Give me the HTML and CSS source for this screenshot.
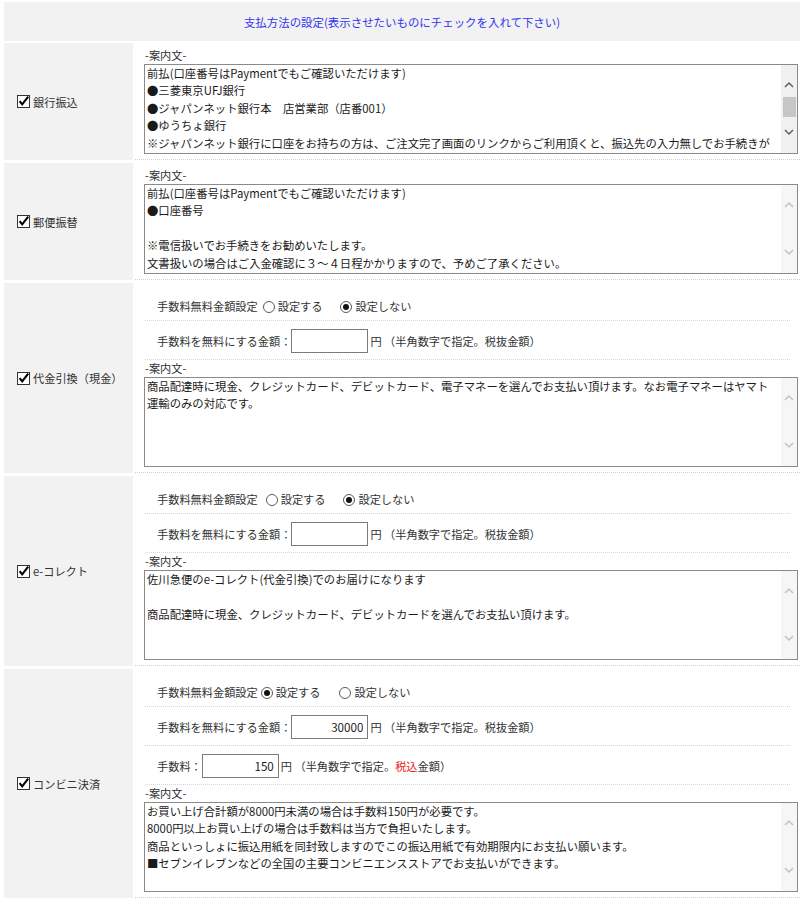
FILE: index.html
```html
<!DOCTYPE html>
<html lang="ja">
<head>
<meta charset="utf-8">
<title>支払方法の設定</title>
<link rel="stylesheet" href="styles.css">
</head>
<body>
<div class="page">
  <div class="head">支払方法の設定(表示させたいものにチェックを入れて下さい)</div>

  <div class="row">
    <div class="name">
      <svg class="cb" width="14" height="14" viewBox="0 0 14 14"><rect x="0.5" y="1.5" width="12" height="12" fill="#fff" stroke="#333"/><path d="M2.6 7.2 L5.2 10.4 L11.2 2.6" fill="none" stroke="#000" stroke-width="2.1"/></svg>
      <span>銀行振込</span>
    </div>
    <div class="body">
      <div class="cap">-案内文-</div>
      <div class="ta">
        <div class="ta-text">前払(口座番号はPaymentでもご確認いただけます)
●三菱東京UFJ銀行
●ジャパンネット銀行本　店営業部（店番001）
●ゆうちょ銀行
※ジャパンネット銀行に口座をお持ちの方は、ご注文完了画面のリンクからご利用頂くと、振込先の入力無しでお手続きが</div>
        <div class="sb sb-on">
          <svg class="arr" width="10" height="8" viewBox="0 0 10 8"><polyline points="1,6 5,2 9,6" fill="none" stroke="#606060" stroke-width="1.5"/></svg>
          <div class="thumb"></div>
          <div class="sp"></div>
          <svg class="arr" width="10" height="8" viewBox="0 0 10 8"><polyline points="1,2 5,6 9,2" fill="none" stroke="#606060" stroke-width="1.5"/></svg>
        </div>
      </div>
    </div>
  </div>

  <div class="row">
    <div class="name">
      <svg class="cb" width="14" height="14" viewBox="0 0 14 14"><rect x="0.5" y="1.5" width="12" height="12" fill="#fff" stroke="#333"/><path d="M2.6 7.2 L5.2 10.4 L11.2 2.6" fill="none" stroke="#000" stroke-width="2.1"/></svg>
      <span>郵便振替</span>
    </div>
    <div class="body">
      <div class="cap">-案内文-</div>
      <div class="ta">
        <div class="ta-text">前払(口座番号はPaymentでもご確認いただけます)
●口座番号

※電信扱いでお手続きをお勧めいたします。
文書扱いの場合はご入金確認に３～４日程かかりますので、予めご了承ください。</div>
        <div class="sb">
          <svg class="arr" width="10" height="8" viewBox="0 0 10 8"><polyline points="1,6 5,2 9,6" fill="none" stroke="#c2c2c2" stroke-width="1.5"/></svg>
          <div class="sp"></div>
          <svg class="arr" width="10" height="8" viewBox="0 0 10 8"><polyline points="1,2 5,6 9,2" fill="none" stroke="#c2c2c2" stroke-width="1.5"/></svg>
        </div>
      </div>
    </div>
  </div>

  <div class="row">
    <div class="name">
      <svg class="cb" width="14" height="14" viewBox="0 0 14 14"><rect x="0.5" y="1.5" width="12" height="12" fill="#fff" stroke="#333"/><path d="M2.6 7.2 L5.2 10.4 L11.2 2.6" fill="none" stroke="#000" stroke-width="2.1"/></svg>
      <span>代金引換（現金）</span>
    </div>
    <div class="body">
      <div class="opts">
        <div class="opt opt-a">
          <span>手数料無料金額設定</span>
          <span class="radio gap-m"></span><span class="rlabel">設定する</span>
          <span class="radio on gap-r"></span><span class="rlabel">設定しない</span>
        </div>
        <div class="opt opt-b">
          <span>手数料を無料にする金額：</span>
          <input class="num" type="text" value="">
          <span class="yen">円 （半角数字で指定。税抜金額）</span>
        </div>
      </div>
      <div class="cap">-案内文-</div>
      <div class="ta">
        <div class="ta-text">商品配達時に現金、クレジットカード、デビットカード、電子マネーを選んでお支払い頂けます。なお電子マネーはヤマト
運輸のみの対応です。</div>
        <div class="sb">
          <svg class="arr" width="10" height="8" viewBox="0 0 10 8"><polyline points="1,6 5,2 9,6" fill="none" stroke="#c2c2c2" stroke-width="1.5"/></svg>
          <div class="sp"></div>
          <svg class="arr" width="10" height="8" viewBox="0 0 10 8"><polyline points="1,2 5,6 9,2" fill="none" stroke="#c2c2c2" stroke-width="1.5"/></svg>
        </div>
      </div>
    </div>
  </div>

  <div class="row">
    <div class="name">
      <svg class="cb" width="14" height="14" viewBox="0 0 14 14"><rect x="0.5" y="1.5" width="12" height="12" fill="#fff" stroke="#333"/><path d="M2.6 7.2 L5.2 10.4 L11.2 2.6" fill="none" stroke="#000" stroke-width="2.1"/></svg>
      <span>e-コレクト</span>
    </div>
    <div class="body">
      <div class="opts">
        <div class="opt opt-a">
          <span>手数料無料金額設定</span>
          <span class="radio gap-l"></span><span class="rlabel">設定する</span>
          <span class="radio on gap-r"></span><span class="rlabel">設定しない</span>
        </div>
        <div class="opt opt-b">
          <span>手数料を無料にする金額：</span>
          <input class="num" type="text" value="">
          <span class="yen">円 （半角数字で指定。税抜金額）</span>
        </div>
      </div>
      <div class="cap">-案内文-</div>
      <div class="ta">
        <div class="ta-text">佐川急便のe-コレクト(代金引換)でのお届けになります

商品配達時に現金、クレジットカード、デビットカードを選んでお支払い頂けます。</div>
        <div class="sb">
          <svg class="arr" width="10" height="8" viewBox="0 0 10 8"><polyline points="1,6 5,2 9,6" fill="none" stroke="#c2c2c2" stroke-width="1.5"/></svg>
          <div class="sp"></div>
          <svg class="arr" width="10" height="8" viewBox="0 0 10 8"><polyline points="1,2 5,6 9,2" fill="none" stroke="#c2c2c2" stroke-width="1.5"/></svg>
        </div>
      </div>
    </div>
  </div>

  <div class="row">
    <div class="name">
      <svg class="cb" width="14" height="14" viewBox="0 0 14 14"><rect x="0.5" y="1.5" width="12" height="12" fill="#fff" stroke="#333"/><path d="M2.6 7.2 L5.2 10.4 L11.2 2.6" fill="none" stroke="#000" stroke-width="2.1"/></svg>
      <span>コンビニ決済</span>
    </div>
    <div class="body">
      <div class="opts">
        <div class="opt opt-a">
          <span>手数料無料金額設定</span>
          <span class="radio on gap-s"></span><span class="rlabel">設定する</span>
          <span class="radio gap-r2"></span><span class="rlabel">設定しない</span>
        </div>
        <div class="opt opt-b">
          <span>手数料を無料にする金額：</span>
          <input class="num" type="text" value="30000">
          <span class="yen">円 （半角数字で指定。税抜金額）</span>
        </div>
        <div class="opt opt-b">
          <span>手数料：</span>
          <input class="num" type="text" value="150">
          <span class="yen">円 （半角数字で指定。<span class="red">税込</span>金額）</span>
        </div>
      </div>
      <div class="cap">-案内文-</div>
      <div class="ta">
        <div class="ta-text">お買い上げ合計額が8000円未満の場合は手数料150円が必要です。
8000円以上お買い上げの場合は手数料は当方で負担いたします。
商品といっしょに振込用紙を同封致しますのでこの振込用紙で有効期限内にお支払い願います。
■セブンイレブンなどの全国の主要コンビニエンスストアでお支払いができます。</div>
        <div class="sb">
          <svg class="arr" width="10" height="8" viewBox="0 0 10 8"><polyline points="1,6 5,2 9,6" fill="none" stroke="#c2c2c2" stroke-width="1.5"/></svg>
          <div class="sp"></div>
          <svg class="arr" width="10" height="8" viewBox="0 0 10 8"><polyline points="1,2 5,6 9,2" fill="none" stroke="#c2c2c2" stroke-width="1.5"/></svg>
        </div>
      </div>
    </div>
  </div>
</div>
</body>
</html>
```

FILE: styles.css
```css
html, body {
  margin: 0;
  padding: 0;
  background: #fff;
}

body {
  font-family: "Noto Sans CJK JP", "Noto Sans", sans-serif;
  font-size: 11.2px;
  color: #333;
}

.page {
  margin: 2px 0 0 4px;
  width: 796px;
  display: flex;
  flex-direction: column;
  gap: 3px;
}

.head {
  height: 39px;
  background: #f2f2f2;
  color: #3535f0;
  font-size: 11.45px;
  display: flex;
  align-items: center;
  justify-content: center;
  padding-top: 1px;
  box-sizing: border-box;
  margin-bottom: -1px;
}

.row {
  display: flex;
  gap: 2px;
}

.name {
  width: 129px;
  flex: none;
  background: #f2f2f2;
  display: flex;
  align-items: center;
  padding-left: 13px;
  box-sizing: border-box;
  color: #333;
}

.cb {
  display: block;
  flex: none;
  margin-right: 2px;
  margin-top: -1px;
}

.body {
  flex: 1;
  padding: 4px 0 5px 9px;
  border-bottom: 1px dotted #cfcfcf;
}

.cap {
  line-height: 17px;
  height: 17px;
  padding-left: 1px;
  color: #333;
}

.ta {
  width: 654px;
  height: 90px;
  box-sizing: border-box;
  border: 1px solid #8a8a8a;
  display: flex;
  background: #fff;
}

.ta-text {
  flex: 1;
  padding: 0 2px;
  white-space: pre;
  overflow: hidden;
  font-size: 11.35px;
  line-height: 17.4px;
  color: #1a1a1a;
}

.sb {
  width: 16px;
  flex: none;
  background: #f6f6f6;
  display: flex;
  flex-direction: column;
  align-items: center;
  padding: 16px 0 17px;
  box-sizing: border-box;
}

.sb-on {
  background: #f0f0f0;
}

.arr {
  display: block;
  flex: none;
}

.thumb {
  width: 13px;
  height: 20px;
  margin-top: 8px;
  background: #c6c6c6;
}

.sp {
  flex: 1;
}

.opts {
  margin-left: 1px;
  width: 645px;
}

.opt {
  display: flex;
  align-items: center;
  border-bottom: 1px dotted #d6d6d6;
  padding-left: 12px;
  white-space: nowrap;
}

.opt-a {
  padding-top: 11px;
  padding-bottom: 5px;
  line-height: 17px;
}

.opt-b {
  padding-top: 8px;
  padding-bottom: 6px;
  line-height: 17px;
}

.radio {
  width: 12px;
  height: 12px;
  box-sizing: border-box;
  border: 1px solid #5a5a5a;
  border-radius: 50%;
  background: #fff;
  display: flex;
  align-items: center;
  justify-content: center;
  flex: none;
}

.radio.on::after {
  content: "";
  width: 6px;
  height: 6px;
  border-radius: 50%;
  background: #111;
}

.rlabel {
  margin-left: 3px;
}

.gap-s { margin-left: 3px; }
.gap-m { margin-left: 5px; }
.gap-l { margin-left: 8px; }
.gap-r { margin-left: 18px; }
.gap-r2 { margin-left: 19px; }

.num {
  width: 77px;
  height: 24px;
  box-sizing: border-box;
  border: 1px solid #7a7a7a;
  border-radius: 0;
  padding: 0 4px;
  margin: 0;
  font-family: inherit;
  font-size: 11.6px;
  color: #1a1a1a;
  text-align: right;
  background: #fff;
  outline: none;
}

.yen {
  margin-left: 2px;
}

.red {
  color: #f01818;
}
```
